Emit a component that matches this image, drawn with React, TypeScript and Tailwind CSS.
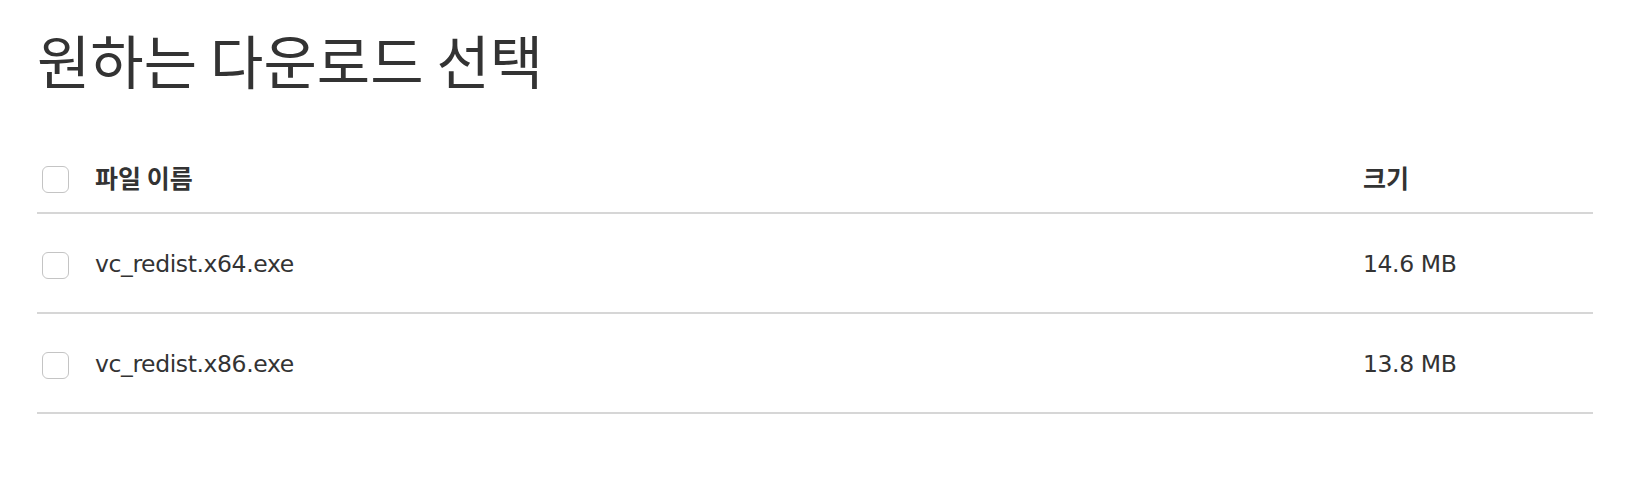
const FONT = '"DejaVu Sans", "Noto Sans CJK KR", sans-serif';
const KR = '"Noto Sans CJK KR", sans-serif';

const files = [
  { name: 'vc_redist.x64.exe', size: '14.6 MB' },
  { name: 'vc_redist.x86.exe', size: '13.8 MB' },
];

function Box() {
  return <span className="block w-[27px] h-[27px] rounded-[6px] border-[1.5px] border-[#c4c4c4] bg-white" />;
}

export default function App() {
  return (
    <div className="min-h-[482px] bg-white pl-[37px] pr-[35px] pt-[24px] text-[#333]" style={{ fontFamily: FONT }}>
      <h1 className="text-[58px] leading-[70px] font-normal" style={{ fontFamily: KR }}>
        원하는 다운로드 선택
      </h1>

      <div className="mt-[58px]">
        <div className="grid grid-cols-[58px_1fr_230px] items-center h-[62px] pb-[6px] border-b-2 border-[#d6d6d6]">
          <div className="pl-[5px]">
            <Box />
          </div>
          <div className="-mt-[3px] text-[25px] leading-none font-bold" style={{ fontFamily: KR }}>
            파일 이름
          </div>
          <div className="-mt-[3px] text-[25px] leading-none font-bold" style={{ fontFamily: KR }}>
            크기
          </div>
        </div>
        {files.map((f) => (
          <div key={f.name} className="grid grid-cols-[58px_1fr_230px] items-center h-[100px] pt-[4px] border-b-2 border-[#d6d6d6]">
            <div className="pl-[5px]">
              <Box />
            </div>
            <div className="text-[23.5px] tracking-[-0.4px]">{f.name}</div>
            <div className="text-[23.5px] tracking-[-0.4px]">{f.size}</div>
          </div>
        ))}
      </div>
    </div>
  );
}
